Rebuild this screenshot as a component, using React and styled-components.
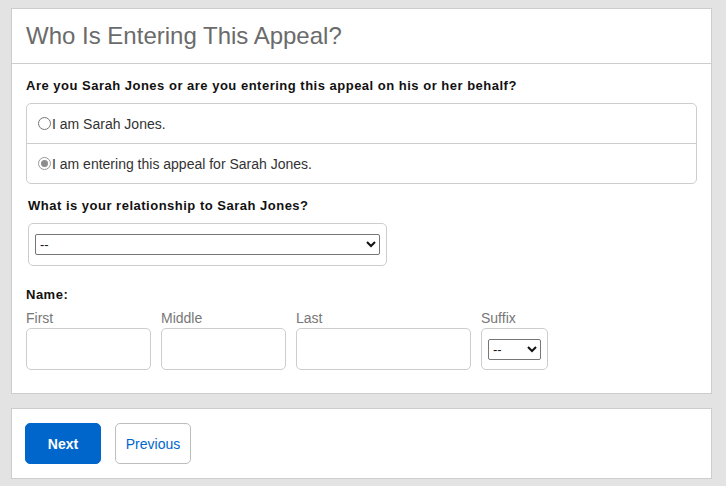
import styled, { createGlobalStyle } from 'styled-components';

const Global = createGlobalStyle`
  html, body {
    margin: 0;
    padding: 0;
    background: #e3e3e3;
    font-family: Arial, "Liberation Sans", sans-serif;
  }
`

const Page = styled.div`
  padding: 8px 14px 8px 11px;
  display: flex;
  flex-direction: column;
  gap: 14px;
`

const Panel = styled.div`
  background: #fff;
  border: 1px solid #cdcdcd;
`

const Header = styled.div`
  height: 54px;
  border-bottom: 1px solid #cdcdcd;
  display: flex;
  align-items: center;
  padding: 0 14px;
  h1 {
    margin: 0;
    font-size: 24px;
    font-weight: normal;
    color: #6b6b6b;
  }
`

const Body = styled.div`
  padding: 14px 14px 23px 14px;
`

const Question = styled.div`
  font-size: 13px;
  font-weight: bold;
  letter-spacing: 0.5px;
  color: #111;
  margin: 0 0 ${p => p.gap ?? 10}px ${p => p.indent || 0}px;
`

const RadioGroup = styled.div`
  border: 1px solid #cdcdcd;
  border-radius: 5px;
  margin-bottom: 14px;
`

const RadioRow = styled.label`
  display: flex;
  align-items: center;
  height: 39px;
  padding: 0 11px;
  font-size: 14px;
  color: #333;
  & + & {
    border-top: 1px solid #cdcdcd;
  }
`

const Radio = styled.span`
  width: 11px;
  height: 11px;
  border-radius: 50%;
  border: 1px solid ${p => (p.checked ? '#999' : '#767676')};
  display: inline-flex;
  align-items: center;
  justify-content: center;
  margin-right: 1px;
  &::after {
    content: '';
    width: 7px;
    height: 7px;
    border-radius: 50%;
    background: ${p => (p.checked ? '#8d8d8d' : 'transparent')};
  }
`

const SelectBox = styled.div`
  border: 1px solid #cdcdcd;
  border-radius: 5px;
  padding: 10px 6px 10px 6px;
  width: 345px;
  margin: 0 0 21px 2px;
`

const Select = styled.select`
  width: ${p => p.width || '100%'};
  height: 21px;
  font-size: 13px;
  font-family: Arial, "Liberation Sans", sans-serif;
  border: 1px solid #767676;
  border-radius: 2px;
  background: #fff;
  color: #111;
`

const NameRow = styled.div`
  display: flex;
  gap: 10px;
  margin-top: 8px;
`

const Field = styled.div`
  display: flex;
  flex-direction: column;
  width: ${p => p.width}px;
  span {
    font-size: 14px;
    color: #777;
    margin-bottom: 2px;
  }
`

const Input = styled.input`
  height: 42px;
  box-sizing: border-box;
  border: 1px solid #cdcdcd;
  border-radius: 5px;
  width: 100%;
`

const SuffixBox = styled.div`
  height: 42px;
  box-sizing: border-box;
  border: 1px solid #cdcdcd;
  border-radius: 5px;
  display: flex;
  align-items: center;
  padding: 0 6px;
`

const Footer = styled.div`
  padding: 14px 13px;
  display: flex;
  gap: 14px;
`

const Button = styled.button`
  width: 76px;
  height: 41px;
  border-radius: 5px;
  font-size: 14px;
  font-family: Arial, "Liberation Sans", sans-serif;
  font-weight: ${p => (p.primary ? 'bold' : 'normal')};
  background: ${p => (p.primary ? '#0066cc' : '#fff')};
  color: ${p => (p.primary ? '#fff' : '#0066cc')};
  border: 1px solid ${p => (p.primary ? '#0066cc' : '#bdbdbd')};
`

export default function App() {
  return (
    <Page>
      <Global />
      <Panel>
        <Header>
          <h1>Who Is Entering This Appeal?</h1>
        </Header>
        <Body>
          <Question>Are you Sarah Jones or are you entering this appeal on his or her behalf?</Question>
          <RadioGroup>
            <RadioRow><Radio />I am Sarah Jones.</RadioRow>
            <RadioRow><Radio checked />I am entering this appeal for Sarah Jones.</RadioRow>
          </RadioGroup>
          <Question indent={2}>What is your relationship to Sarah Jones?</Question>
          <SelectBox>
            <Select><option>--</option></Select>
          </SelectBox>
          <Question gap={0}>Name:</Question>
          <NameRow>
            <Field width={125}><span>First</span><Input /></Field>
            <Field width={125}><span>Middle</span><Input /></Field>
            <Field width={175}><span>Last</span><Input /></Field>
            <Field width={67}>
              <span>Suffix</span>
              <SuffixBox><Select width="53px"><option>--</option></Select></SuffixBox>
            </Field>
          </NameRow>
        </Body>
      </Panel>
      <Panel>
        <Footer>
          <Button primary>Next</Button>
          <Button>Previous</Button>
        </Footer>
      </Panel>
    </Page>
  );
}
